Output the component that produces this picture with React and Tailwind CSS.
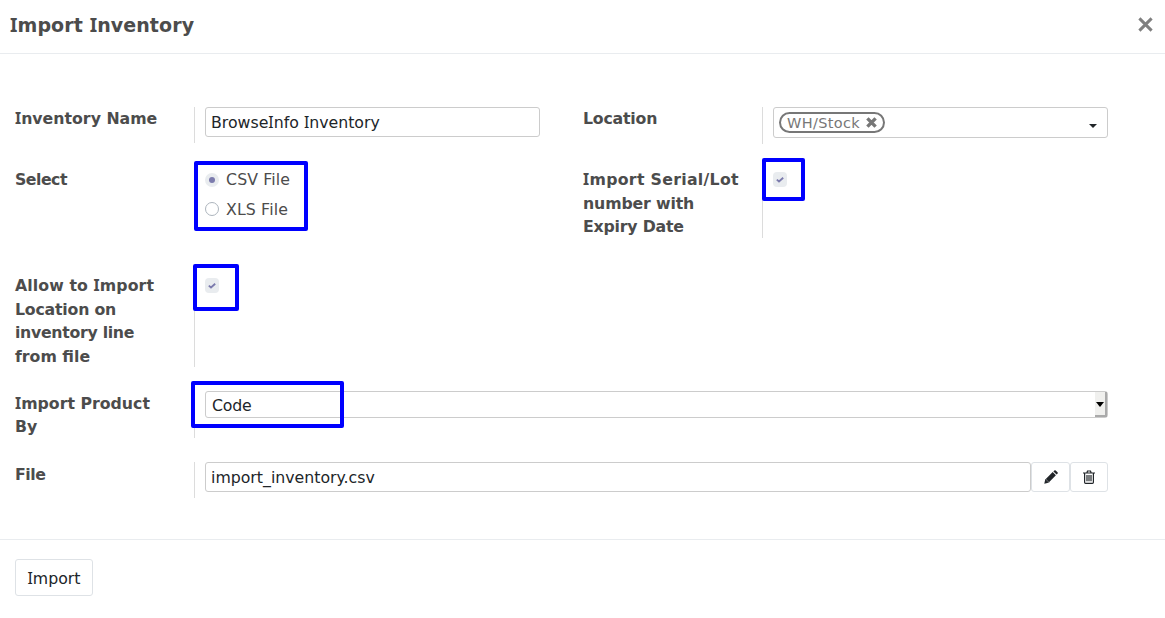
function T({ children }) {
  return children.split(/(?=I)/).map((piece, i) =>
    piece[0] === "I" ? (
      <span key={i} className="inline-block whitespace-pre first-letter:font-['Noto_Sans',sans-serif] first-letter:leading-none">{piece}</span>
    ) : (
      piece
    )
  );
}

const tracking = {
  "Select": "tracking-[-0.5px]",
  "File": "tracking-[-0.4px]",
  "Location": "tracking-[-0.2px]",
  "Import Serial/Lot": "tracking-[0.3px]",
  "number with": "tracking-[-0.15px]",
  "Expiry Date": "tracking-[-0.2px]",
  "Allow to Import": "tracking-[0.1px]",
  "Location on": "tracking-[-0.2px]",
  "inventory line": "tracking-[-0.3px]",
};

function Row({ label, height, gap, children, labelShift = "" }) {
  return (
    <div className={`flex ${height} ${gap}`}>
      <div className={`w-[179px] shrink-0 font-bold leading-[23.6px] text-[#4c4c4c] ${labelShift}`}>
        {label.split("\n").map((text) => (
          <div key={text} className={`h-[23.6px] whitespace-pre ${tracking[text] || ""}`}><T>{text}</T></div>
        ))}
      </div>
      <div className="h-full w-px shrink-0 bg-[#dcdcdc]" />
      <div className="relative ml-[10px] min-w-0 grow">{children}</div>
    </div>
  );
}

function Check() {
  return (
    <div className="mt-[4px] flex h-[15px] w-[14px] items-center justify-center rounded-[4px] bg-[#e9ecef]">
      <svg width="8" height="6" viewBox="0 0 8 6" fill="none" stroke="#7c7bad" strokeWidth="1.8">
        <path d="M0.8 2.6L3 4.5L7.2 0.8" />
      </svg>
    </div>
  );
}

function Mark({ place }) {
  return <div className={`pointer-events-none absolute z-10 rounded-[2px] border-4 border-[#0000ff] ${place}`} />;
}

export default function App() {
  return (
    <div className="h-[618px] w-[1165px] overflow-hidden bg-white font-['DejaVu_Sans',sans-serif] text-[15.75px] leading-[24px] text-[#212529]">
      <header className="flex h-[54px] items-center justify-between border-b border-[#e9ecef] pr-[12px] pb-[4px] pl-[10px]">
        <h1 className="text-[19px] font-bold leading-[30px] tracking-[0.1px] text-[#4c4c4c]"><T>Import Inventory</T></h1>
        <svg className="-mt-px" width="15" height="15" viewBox="0 0 15 15" stroke="#7f7f7f" strokeWidth="3" fill="none">
          <path d="M1.4 1.4L13.6 13.6M13.6 1.4L1.4 13.6" />
        </svg>
      </header>

      <main className="h-[485px] pt-[53px] pl-[15px]">
        <div className="flex">
          <div className="w-[525px]">
            <Row label="Inventory Name" height="h-[36px]" gap="mb-[25px]">
              <div className="flex h-[30px] w-full items-center rounded-[3px] border border-[#cccccc] px-[5px] pt-px"><span><T>BrowseInfo Inventory</T></span></div>
            </Row>
            <Row label="Select" height="h-[60px]" gap="mb-[46px]">
              <div className="tracking-[0.13px] text-[#4c4c4c]">
                <div className="flex h-[24px] items-center gap-[7px]">
                  <span className="-mt-px flex h-[14px] w-[14px] items-center justify-center rounded-full bg-[#e9ecef]">
                    <span className="h-[6px] w-[6px] rounded-full bg-[#7c7bad]" />
                  </span>
                  CSV File
                </div>
                <div className="mt-[6px] flex h-[24px] items-center gap-[7px]">
                  <span className="-mt-[2px] h-[14px] w-[14px] rounded-full border border-[#adb5bd]" />
                  XLS File
                </div>
              </div>
              <Mark place="-left-[11px] -top-[7px] h-[70px] w-[114px]" />
            </Row>
          </div>
          <div className="ml-[43px] w-[525px]">
            <Row label="Location" height="h-[37px]" gap="mb-[24px]">
              <div className="flex h-[31px] w-full items-center justify-between rounded-[3px] border border-[#cccccc] pr-[10px] pl-[5px]">
                <span className="flex h-[21px] w-[106px] items-center justify-between rounded-full border-2 border-[#777777] pr-[6px] pl-[6px] text-[14.5px] tracking-[0.35px] text-[#777777]">
                  WH/Stock
                  <svg width="11" height="11" viewBox="0 0 11 11" stroke="#777777" strokeWidth="3.4">
                    <path d="M1.4 1.4L9.6 9.6M9.6 1.4L1.4 9.6" />
                  </svg>
                </span>
                <svg className="mt-[7px]" width="8" height="4" viewBox="0 0 8 4"><path d="M0 0H8L4 4Z" fill="#212529" /></svg>
              </div>
            </Row>
            <Row label={"Import Serial/Lot\nnumber with\nExpiry Date"} height="h-[70px]" gap="">
              <Check />
              <Mark place="-left-[11px] -top-[10px] h-[43px] w-[43px]" />
            </Row>
          </div>
        </div>
        <div className="w-[1093px]">
          <Row label={"Allow to Import\nLocation on\ninventory line\nfrom file"} height="h-[93px]" gap="mb-[24px]">
            <Check />
            <Mark place="-left-[12px] -top-[10px] h-[47px] w-[46px]" />
          </Row>
          <Row label={"Import Product\nBy"} height="h-[47px]" gap="mb-[24px]" labelShift="pt-[0.8px]">
            <div className="flex h-[27px] w-full items-center justify-between rounded-[3px] border border-[#cccccc] pl-[6px]">
              <span className="pt-[2px] tracking-[-0.2px]">Code</span>
              <span className="flex h-full w-[12px] items-center justify-center border-r-2 border-b-2 border-[#aaaaaa] bg-[#f0f0ee]">
                <svg className="mt-px" width="8" height="5" viewBox="0 0 8 5"><path d="M0 0H8L4 5Z" fill="#000" /></svg>
              </span>
            </div>
            <Mark place="-left-[14px] -top-[10px] h-[47px] w-[153px]" />
          </Row>
          <Row label="File" height="h-[36px]" gap="" labelShift="pt-[1px]">
            <div className="flex">
              <div className="mr-px flex h-[30px] w-[826px] shrink-0 items-center rounded-[3px] border border-[#cccccc] px-[5px] pt-px">import_inventory.csv</div>
              <button className="-ml-px flex h-[30px] w-[39px] shrink-0 items-center justify-center rounded-[3px] border border-[#dee2e6]">
                <svg width="14" height="14" viewBox="0 0 14 14" fill="#212529">
                  <path d="M0.3 13.7L1.2 9.6L4.4 12.8ZM1.8 9L8.7 2.1L11.9 5.3L5 12.2ZM9.4 1.4L10.3 0.5Q11 -0.1 11.7 0.5L13.5 2.3Q14.1 3 13.5 3.7L12.6 4.6Z" />
                  <path d="M1.4 9.2L4.8 12.6" stroke="#212529" strokeWidth="1" />
                </svg>
              </button>
              <button className="flex h-[30px] w-[38px] shrink-0 items-center justify-center rounded-[3px] border border-[#dee2e6]">
                <svg width="12" height="14" viewBox="0 0 12 14" fill="none" stroke="#212529" strokeWidth="1.2">
                  <path d="M0 3H12M3.8 3L4.5 1H7.5L8.2 3M1.6 3V12.2Q1.6 13.3 2.6 13.3H9.4Q10.4 13.3 10.4 12.2V3M4 5V11.2M6 5V11.2M8 5V11.2" />
                </svg>
              </button>
            </div>
          </Row>
        </div>
      </main>

      <footer className="border-t border-[#e9ecef] pt-[19px] pl-[15px]">
        <button className="flex h-[37px] w-[78px] items-center justify-center rounded-[3px] border border-[#dee2e6] pt-[2px]"><span><T>Import</T></span></button>
      </footer>
    </div>
  );
}
